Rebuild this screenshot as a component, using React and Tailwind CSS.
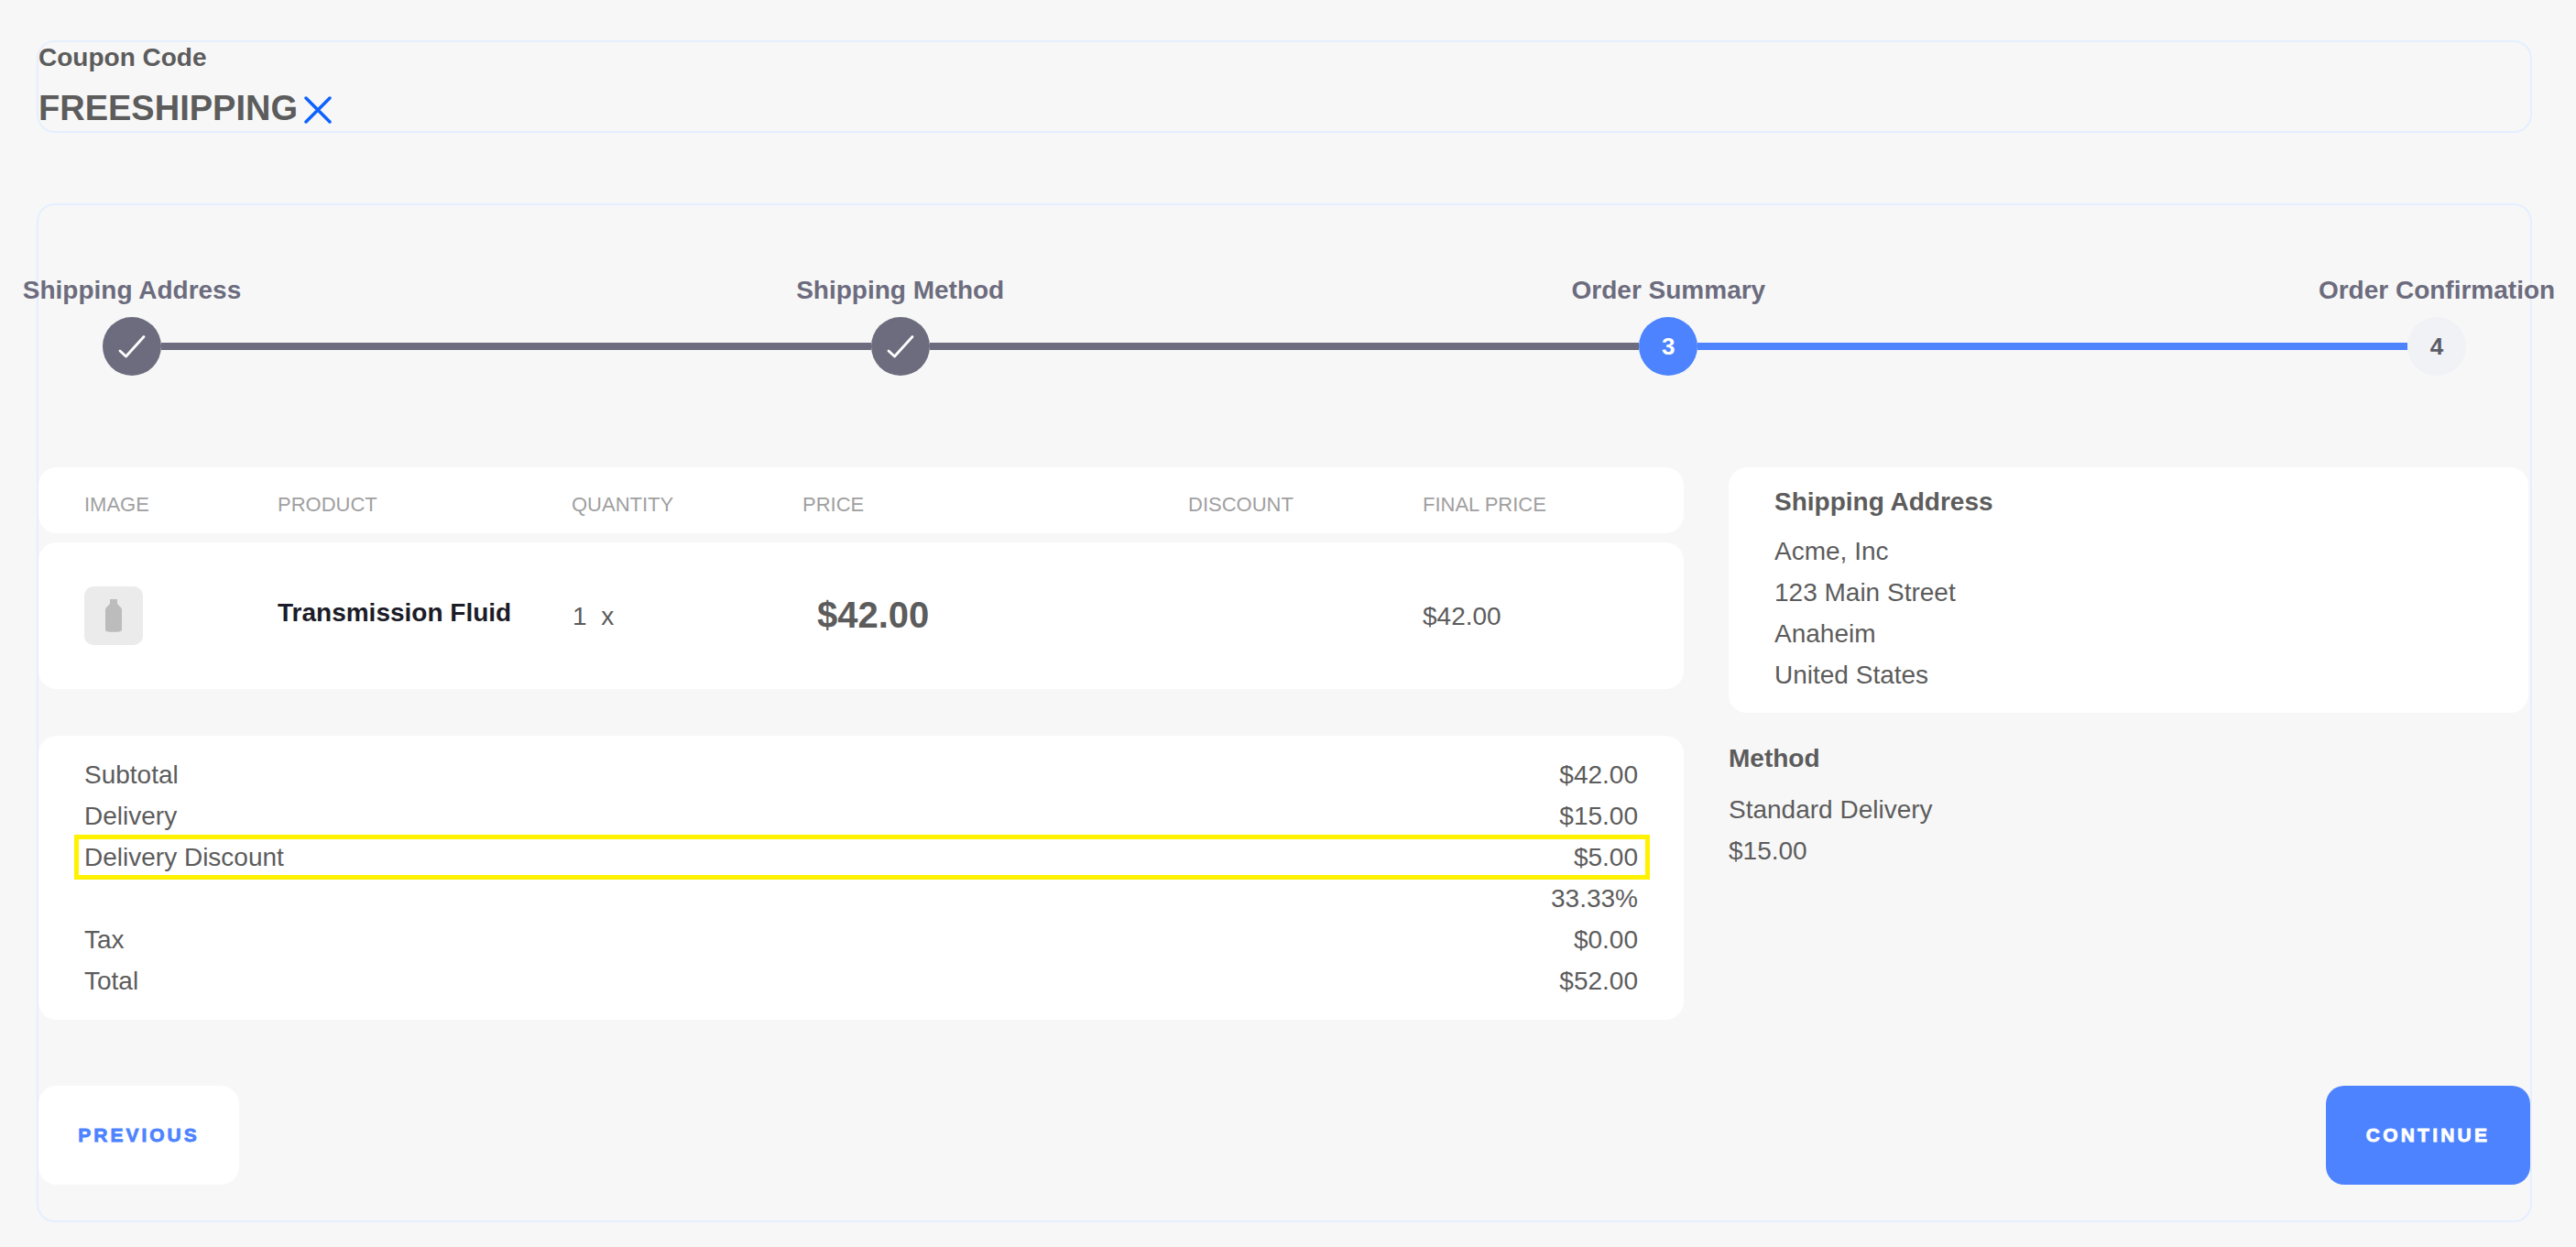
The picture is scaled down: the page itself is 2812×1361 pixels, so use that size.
const steps = [
  { label: "Shipping Address", done: true },
  { label: "Shipping Method", done: true },
  { label: "Order Summary", number: 3, active: true },
  { label: "Order Confirmation", number: 4 },
];

const totals = [
  { label: "Subtotal", value: "$42.00" },
  { label: "Delivery", value: "$15.00" },
  { label: "Delivery Discount", value: "$5.00", highlight: true },
  { label: "", value: "33.33%" },
  { label: "Tax", value: "$0.00" },
  { label: "Total", value: "$52.00" },
];

function Bottle() {
  return (
    <svg width="18" height="36" viewBox="0 0 18 36" className="text-[#bcbcbc]">
      <path
        fill="currentColor"
        d="M5 0h8v5l3.500 3.500C17.500 9.500 18 10.800 18 12v21c0 1.200-.8 2-2 2.200-4.500.8-9.500.8-14 0-1.200-.2-2-1-2-2.200V12c0-1.200.5-2.500 1.500-3.500L5 5z"
      />
    </svg>
  );
}

function CheckMark() {
  return (
    <svg width="64" height="64" viewBox="0 0 64 64">
      <path d="M19 37 L25.500 43 L45 21.500" fill="none" stroke="white" strokeWidth="2.800" strokeLinecap="round" strokeLinejoin="round" />
    </svg>
  );
}

function Stepper() {
  return (
    <div className="flex px-[70px] pt-[70px]">
      {steps.map((step, idx) => (
        <div key={step.label} className={idx < 3 ? "flex flex-1 items-end" : "flex items-end"}>
          <div className="flex w-16 flex-col items-center">
            <div className="mb-[7px] whitespace-nowrap text-[28px] font-bold leading-[45px] text-[#6c6c7e]">{step.label}</div>
            <div
              className={
                step.done
                  ? "flex h-16 w-16 items-center justify-center rounded-full bg-[#6c6c7e]"
                  : step.active
                    ? "flex h-16 w-16 items-center justify-center rounded-full bg-[#4d83ff] text-[26px] font-bold text-white"
                    : "flex h-16 w-16 items-center justify-center rounded-full bg-[#f1f2f6] text-[26px] font-bold text-[#5c5c68]"
              }
            >
              {step.done ? <CheckMark /> : step.number}
            </div>
          </div>
          {idx < 3 && (
            <div className={step.active ? "mb-7 h-2 flex-1 bg-[#4d83ff]" : "mb-7 h-2 flex-1 bg-[#6c6c7e]"} />
          )}
        </div>
      ))}
    </div>
  );
}

export default function App() {
  return (
    <div className="min-h-[1361px] bg-[#f7f7f7] pb-[27px] pl-10 pr-12 pt-11 font-['Liberation_Sans',Arial,sans-serif] text-[28px] leading-[45px] text-[#5c5c5c]">
      {/* Coupon */}
      <div className="h-[101px] rounded-[20px] border-2 border-[#e5efff]">
        <div className="-mt-[6px] h-[36px] text-[28px] font-bold leading-[45px]">Coupon Code</div>
        <div className="mt-[20px] flex items-center">
          <span className="text-[38px] font-bold leading-[45px]">FREESHIPPING</span>
          <svg width="30" height="30" viewBox="0 0 30 30" className="ml-[7px] mt-[3px] text-[#0d62ff]">
            <path d="M2 2 L28 28 M28 2 L2 28" stroke="currentColor" strokeWidth="3.500" strokeLinecap="round" />
          </svg>
        </div>
      </div>

      {/* Checkout */}
      <div className="mt-[77px] h-[1112px] rounded-[20px] border-2 border-[#e5efff]">
        <Stepper />

        <div className="mt-[100px] flex items-start">
          <div className="w-[1796px]">
            <div className="grid h-[72px] grid-cols-[211px_321px_252px_421px_256px_1fr] items-center rounded-[20px] bg-white pl-[50px] pt-[8px] text-[22px] uppercase text-[#a0a0a0]">
              <div>Image</div>
              <div>Product</div>
              <div>Quantity</div>
              <div>Price</div>
              <div>Discount</div>
              <div>Final Price</div>
            </div>

            <div className="mt-[10px] grid h-[160px] grid-cols-[211px_321px_252px_421px_256px_1fr] items-center rounded-[20px] bg-white pl-[50px]">
              <div className="flex h-16 w-16 items-center justify-center rounded-[10px] bg-[#ebebeb]">
                <Bottle />
              </div>
              <div className="-mt-[8px] font-bold text-[#1c1c28]">Transmission Fluid</div>
              <div className="whitespace-pre pl-[1px]">1  x</div>
              <div className="-mt-[2px] pl-4 text-[40px] font-bold">$42.00</div>
              <div />
              <div>$42.00</div>
            </div>

            <div className="mt-[51px] rounded-[20px] bg-white px-[50px] py-5">
              {totals.map((row) => (
                <div key={row.value} className="relative flex justify-between">
                  <span>{row.label}</span>
                  <span>{row.value}</span>
                  {row.highlight && (
                    <div className="absolute -bottom-[2px] -left-[11px] -right-[13px] -top-[2px] border-[5px] border-[#fff200]" />
                  )}
                </div>
              ))}
            </div>
          </div>

          <div className="ml-[49px] w-[873px]">
            <div className="rounded-[20px] bg-white px-[50px] pb-[19px] pt-[15px]">
              <div className="font-bold">Shipping Address</div>
              <div className="mt-[9px]">Acme, Inc</div>
              <div>123 Main Street</div>
              <div>Anaheim</div>
              <div>United States</div>
            </div>
            <div className="mt-[27px] font-bold">Method</div>
            <div className="mt-[11px]">Standard Delivery</div>
            <div>$15.00</div>
          </div>
        </div>

        <div className="mt-[72px] flex justify-between">
          <button className="h-[108px] w-[219px] rounded-[20px] bg-white pb-[2px] text-[21px] font-bold tracking-[3px] text-[#4d83ff] [-webkit-text-stroke:0.8px_#4d83ff]">
            PREVIOUS
          </button>
          <button className="h-[108px] w-[223px] rounded-[20px] bg-[#4d83ff] pb-[2px] text-[21px] font-bold tracking-[3.200px] text-white [-webkit-text-stroke:0.8px_#ffffff]">
            CONTINUE
          </button>
        </div>
      </div>
    </div>
  );
}
